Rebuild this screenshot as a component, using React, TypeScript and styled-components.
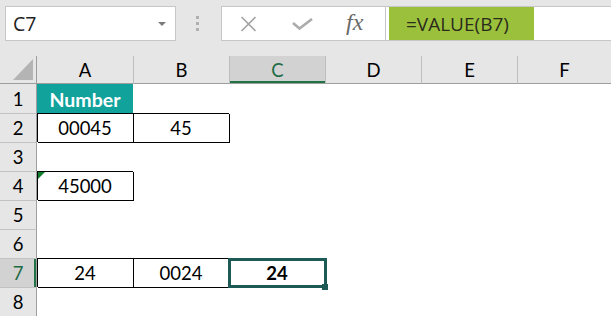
import React from "react";
import styled, { createGlobalStyle } from "styled-components";

const GlobalStyle = createGlobalStyle`
  html, body { margin: 0; padding: 0; background: #e6e6e6; }
  * { box-sizing: border-box; }
`;

const Window = styled.div`
  width: 611px;
  height: 316px;
  overflow: hidden;
  background: #e6e6e6;
  display: flex;
  flex-direction: column;
`;

const FormulaBar = styled.div`
  height: 56px;
  flex: none;
  display: flex;
  align-items: flex-start;
  padding: 6px 0 0 5px;
`;

const NameBox = styled.div`
  width: 171px;
  height: 35px;
  background: #fff;
  border: 1px solid #c6c6c6;
  display: flex;
  align-items: center;
  justify-content: space-between;
  padding: 0 9px 0 7px;
  font-family: "Open Sans", "Noto Sans", sans-serif;
  font-size: 19.5px;
  color: #222;
`;

const Caret = styled.span`
  width: 0;
  height: 0;
  border-left: 4px solid transparent;
  border-right: 4px solid transparent;
  border-top: 4px solid #7b7b7b;
  margin-top: 1px;
`;

const Grip = styled.div`
  width: 45px;
  height: 35px;
  display: flex;
  flex-direction: column;
  align-items: center;
  justify-content: center;
  gap: 3px;
  padding-right: 3px;
`;

const Dot = styled.span`
  width: 3px;
  height: 3px;
  background: #b0b0b0;
`;

const FxGroup = styled.div`
  width: 165px;
  height: 35px;
  background: #fff;
  border: 1px solid #c6c6c6;
  display: flex;
  align-items: center;
  padding-left: 18px;
`;

const IconSlot = styled.span<{ $gap?: number }>`
  display: flex;
  align-items: center;
  margin-left: ${(p) => p.$gap ?? 0}px;
`;

const Fx = styled.span`
  font-family: "Liberation Serif", "DejaVu Serif", serif;
  font-style: italic;
  font-size: 24px;
  color: #6a6a6a;
  line-height: 1;
  margin-top: -3px;
`;

const FormulaInput = styled.div`
  flex: 1;
  height: 35px;
  background: #fff;
  border: 1px solid #c6c6c6;
  border-left: none;
  border-right: none;
  padding-left: 3px;
  display: flex;
`;

const Highlight = styled.div`
  width: 145px;
  height: 100%;
  background: #9bc13c;
  color: #2b2b1c;
  font-family: "Open Sans", "Noto Sans", sans-serif;
  font-size: 19px;
  display: flex;
  align-items: center;
  padding-left: 17px;
  white-space: nowrap;
`;

const Sheet = styled.div`
  flex: 1;
  display: grid;
  grid-template-columns: 37px repeat(5, 96px) 1fr;
  grid-template-rows: 28px repeat(8, 29px);
  background: #fff;
`;

const Corner = styled.div`
  background: #e6e6e6;
  border-right: 1px solid #9e9e9e;
  border-bottom: 1px solid #9e9e9e;
  position: relative;
`;

const CornerTriangle = styled.span`
  position: absolute;
  right: 3px;
  bottom: 3px;
  width: 0;
  height: 0;
  border-left: 20px solid transparent;
  border-bottom: 21px solid #b4b4b4;
`;

const ColHead = styled.div<{ $selected?: boolean; $first?: boolean }>`
  background: ${(p) => (p.$selected ? "#d2d2d2" : "#e6e6e6")};
  border-left: ${(p) => (p.$first ? "none" : "1px solid #bdbdbd")};
  border-bottom: 1px solid #9e9e9e;
  box-shadow: ${(p) => (p.$selected ? "inset 0 -2px 0 #217346" : "none")};
  color: ${(p) => (p.$selected ? "#1e6b45" : "#000")};
  display: flex;
  align-items: center;
  justify-content: center;
  font-family: Lato, "Open Sans", sans-serif;
  font-size: 18.5px;
  padding-top: 1px;
`;

const RowHead = styled.div<{ $selected?: boolean; $first?: boolean }>`
  background: ${(p) => (p.$selected ? "#d2d2d2" : "#e6e6e6")};
  border-right: 1px solid #9e9e9e;
  border-top: ${(p) => (p.$first ? "none" : "1px solid #c2c2c2")};
  box-shadow: ${(p) => (p.$selected ? "inset -2px 0 0 #217346" : "none")};
  color: ${(p) => (p.$selected ? "#1e6b45" : "#000")};
  display: flex;
  align-items: center;
  justify-content: center;
  font-family: Lato, "Open Sans", sans-serif;
  font-size: 18.5px;
`;

const Cell = styled.div<{ $bordered?: boolean; $fill?: string; $bold?: boolean }>`
  position: relative;
  background: ${(p) => p.$fill ?? "transparent"};
  box-shadow: ${(p) =>
    p.$bordered ? "inset 1px 1px 0 0 #000, 1px 1px 0 0 #000" : "none"};
  color: ${(p) => (p.$fill ? "#fff" : "#000")};
  font-weight: ${(p) => (p.$bold ? 700 : 400)};
  font-family: Lato, "Open Sans", sans-serif;
  font-size: 18.5px;
  display: flex;
  align-items: center;
  justify-content: center;
  padding-top: 1px;
`;

const HeaderText = styled.span`
  font-size: 19.5px;
  font-weight: 700;
`;

const ErrorMark = styled.span`
  position: absolute;
  left: 1px;
  top: 1px;
  width: 0;
  height: 0;
  border-top: 7px solid #0f7d2a;
  border-right: 7px solid transparent;
`;

const Selection = styled.span`
  position: absolute;
  left: -1px;
  top: 0;
  width: 99px;
  height: 30px;
  border: 3px solid #1d5a55;
  pointer-events: none;
`;

const FillHandle = styled.span`
  position: absolute;
  left: 93px;
  top: 26px;
  width: 6px;
  height: 6px;
  background: #1d5a55;
`;

type CellData = {
  text?: string;
  bordered?: boolean;
  fill?: string;
  bold?: boolean;
  error?: boolean;
  selected?: boolean;
  header?: boolean;
};

const cols = ["A", "B", "C", "D", "E", "F"];

const data: Record<string, CellData> = {
  A1: { text: "Number", fill: "#10a29b", header: true },
  A2: { text: "00045", bordered: true },
  B2: { text: "45", bordered: true },
  A4: { text: "45000", bordered: true, error: true },
  A7: { text: "24", bordered: true },
  B7: { text: "0024", bordered: true },
  C7: { text: "24", bold: true, selected: true },
};

const XIcon = () => (
  <svg width="17" height="16" viewBox="0 0 17 16">
    <path d="M1.5 1 L15.5 15 M15.5 1 L1.5 15" stroke="#a3a3a3" strokeWidth="1.6" fill="none" />
  </svg>
);

const CheckIcon = () => (
  <svg width="21" height="12" viewBox="0 0 21 12">
    <path d="M1 5 L7.5 10.5 L20 1" stroke="#acacac" strokeWidth="2.6" fill="none" />
  </svg>
);

export default function App() {
  const rows = [1, 2, 3, 4, 5, 6, 7, 8];
  return (
    <>
      <GlobalStyle />
      <Window>
        <FormulaBar>
          <NameBox>
            <span>C7</span>
            <Caret />
          </NameBox>
          <Grip>
            <Dot />
            <Dot />
            <Dot />
          </Grip>
          <FxGroup>
            <IconSlot>
              <XIcon />
            </IconSlot>
            <IconSlot $gap={35}>
              <CheckIcon />
            </IconSlot>
            <IconSlot $gap={33}>
              <Fx>fx</Fx>
            </IconSlot>
          </FxGroup>
          <FormulaInput>
            <Highlight>=VALUE(B7)</Highlight>
          </FormulaInput>
        </FormulaBar>
        <Sheet>
          <Corner>
            <CornerTriangle />
          </Corner>
          {cols.map((c, i) => (
            <ColHead key={c} $first={i === 0} $selected={c === "C"}>
              {c}
            </ColHead>
          ))}
          {rows.map((r) => (
            <React.Fragment key={r}>
              <RowHead $first={r === 1} $selected={r === 7}>
                {r}
              </RowHead>
              {cols.map((c) => {
                const d = data[`${c}${r}`] ?? {};
                return (
                  <Cell
                    key={c}
                    $bordered={d.bordered}
                    $fill={d.fill}
                    $bold={d.bold}
                  >
                    {d.error && <ErrorMark />}
                    {d.header ? <HeaderText>{d.text}</HeaderText> : d.text}
                    {d.selected && (
                      <>
                        <Selection />
                        <FillHandle />
                      </>
                    )}
                  </Cell>
                );
              })}
            </React.Fragment>
          ))}
        </Sheet>
      </Window>
    </>
  );
}
